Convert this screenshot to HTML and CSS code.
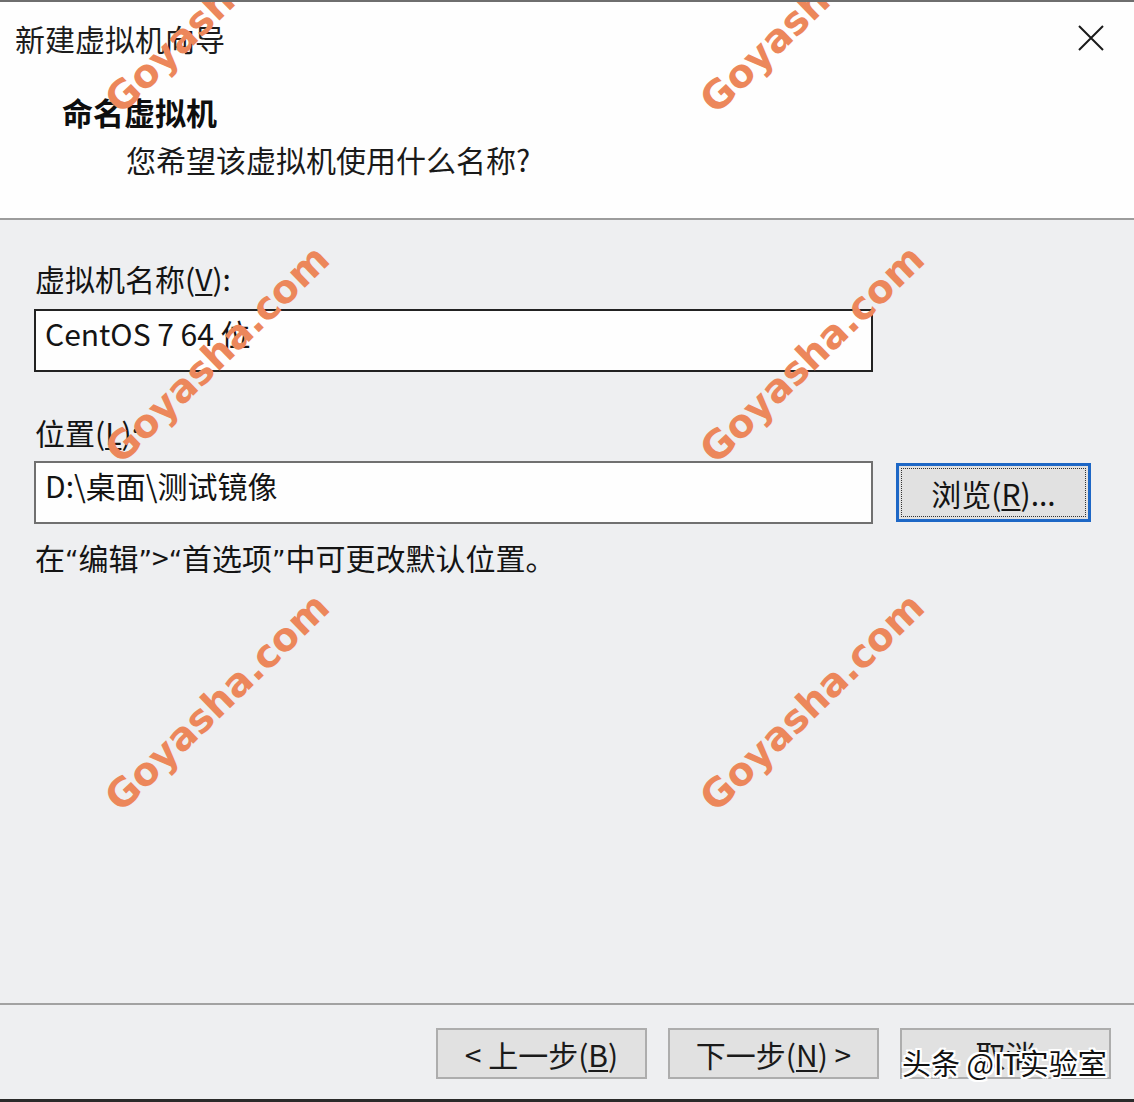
FILE: index.html
```html
<!DOCTYPE html>
<html lang="zh-CN">
<head>
<meta charset="utf-8">
<title>新建虚拟机向导</title>
<link rel="stylesheet" href="styles.css">
</head>
<body>
<div class="window">
  <header class="head">
    <div class="titlebar">
      <span class="title">新建虚拟机向导</span>
      <svg class="close" width="26" height="26" viewBox="0 0 26 26" aria-label="关闭">
        <path d="M1 1 L25 25 M25 1 L1 25" stroke="#1a1a1a" stroke-width="2" fill="none"/>
      </svg>
    </div>
    <div class="heading">命名虚拟机</div>
    <div class="subheading">您希望该虚拟机使用什么名称?</div>
  </header>

  <main class="content">
    <div class="label">虚拟机名称(<u>V</u>):</div>
    <div class="input input-focus">CentOS 7 64 位</div>
    <div class="label label-gap">位置(<u>L</u>):</div>
    <div class="row">
      <div class="input input-plain">D:\桌面\测试镜像</div>
      <div class="browse"><span class="focus-rect">浏览(<u>R</u>)...</span></div>
    </div>
    <p class="hint">在<span class="q">&#8220;</span>编辑<span class="q">&#8221;</span>&gt;<span class="q">&#8220;</span>首选项<span class="q">&#8221;</span>中可更改默认位置。</p>
  </main>

  <footer class="foot">
    <div class="btn">&lt; 上一步(<u>B</u>)</div>
    <div class="btn">下一步(<u>N</u>) &gt;</div>
    <div class="btn">取消</div>
  </footer>

  <span class="wm wm-a">Goyasha.com</span>
  <span class="wm wm-b">Goyasha.com</span>
  <span class="wm wm-c">Goyasha.com</span>
  <span class="wm wm-d">Goyasha.com</span>
  <span class="wm wm-e">Goyasha.com</span>
  <span class="wm wm-f">Goyasha.com</span>
  <span class="credit">头条 @IT实验室</span>
</div>
</body>
</html>
```

FILE: styles.css
```css
* { box-sizing: border-box; }

body {
  margin: 0;
  width: 1134px;
  height: 1102px;
  overflow: hidden;
  font-family: "Noto Sans CJK SC", "Noto Sans", sans-serif;
  color: #141414;
}

.window {
  position: relative;
  width: 1134px;
  height: 1102px;
  background: #eeeff1;
  border-top: 2px solid #6e6e6e;
  border-bottom: 3px solid #2a2a2a;
  display: flex;
  flex-direction: column;
  overflow: hidden;
}

.head {
  flex: none;
  height: 218px;
  background: #fefefe;
  border-bottom: 2px solid #9c9c9c;
}

.titlebar {
  display: flex;
  justify-content: space-between;
  align-items: center;
  padding: 16px 30px 0 15px;
  height: 56px;
}

.title {
  font-size: 30px;
  line-height: 40px;
  color: #1c1c1c;
}

.close { display: block; }

.heading {
  margin-top: 34px;
  padding-left: 62px;
  font-size: 31px;
  line-height: 40px;
  font-weight: 700;
  color: #0e0e0e;
}

.subheading {
  margin-top: 7px;
  padding-left: 126px;
  font-size: 30px;
  line-height: 40px;
  color: #1a1a1a;
}

.content {
  flex: 1;
  padding: 38px 43px 0 34px;
}

.label {
  font-size: 30px;
  line-height: 40px;
  padding-left: 1px;
  margin-bottom: 11px;
}

.label-gap {
  margin-top: 40px;
  margin-bottom: 9px;
}

.label u, .browse u, .btn u { text-underline-offset: 3px; text-decoration-thickness: 2px; }

.input {
  width: 839px;
  height: 63px;
  background: #fefefe;
  font-size: 30px;
  line-height: 40px;
  padding: 2px 9px;
}

.input-focus { border: 2px solid #222; }
.input-plain { border: 2px solid #707070; }

.row {
  display: flex;
  align-items: center;
  gap: 23px;
}

.browse {
  width: 195px;
  height: 59px;
  background: #e1e1e1;
  border: 3px solid #1d67c6;
  padding: 2px;
  display: flex;
}

.focus-rect {
  flex: 1;
  border: 1px dotted #333;
  display: flex;
  align-items: center;
  justify-content: center;
  font-size: 30px;
  line-height: 40px;
}

.hint {
  margin: 13px 0 0;
  padding-left: 1px;
  font-size: 30px;
  line-height: 40px;
}

.q {
  font-family: "DejaVu Sans", sans-serif;
  font-size: 26px;
}

.foot {
  flex: none;
  height: 96px;
  border-top: 2px solid #a2a2a2;
  display: flex;
  justify-content: flex-end;
  align-items: flex-start;
  gap: 21px;
  padding: 23px 23px 0 0;
}

.btn {
  width: 211px;
  height: 51px;
  background: #e1e1e1;
  border: 2px solid #adadad;
  display: flex;
  align-items: center;
  justify-content: center;
  font-size: 30px;
  line-height: 40px;
  color: #1a1a1a;
}

.wm {
  position: absolute;
  transform: translate(-50%, -50%) rotate(-44deg);
  font-family: "DejaVu Sans", sans-serif;
  font-weight: 700;
  font-size: 39px;
  line-height: 1;
  color: #ec875b;
  white-space: nowrap;
  pointer-events: none;
}

.wm-a { left: 217px; top: 2px; }
.wm-b { left: 812px; top: 2px; }
.wm-c { left: 217px; top: 352px; }
.wm-d { left: 812px; top: 352px; }
.wm-e { left: 217px; top: 700px; }
.wm-f { left: 812px; top: 700px; }

.credit {
  position: absolute;
  left: 902px;
  top: 1040px;
  font-size: 29px;
  line-height: 40px;
  color: #111;
  white-space: nowrap;
  text-shadow: 2px 0 0 #fff, -2px 0 0 #fff, 0 2px 0 #fff, 0 -2px 0 #fff,
               2px 2px 0 #fff, -2px -2px 0 #fff, 2px -2px 0 #fff, -2px 2px 0 #fff;
}
```
